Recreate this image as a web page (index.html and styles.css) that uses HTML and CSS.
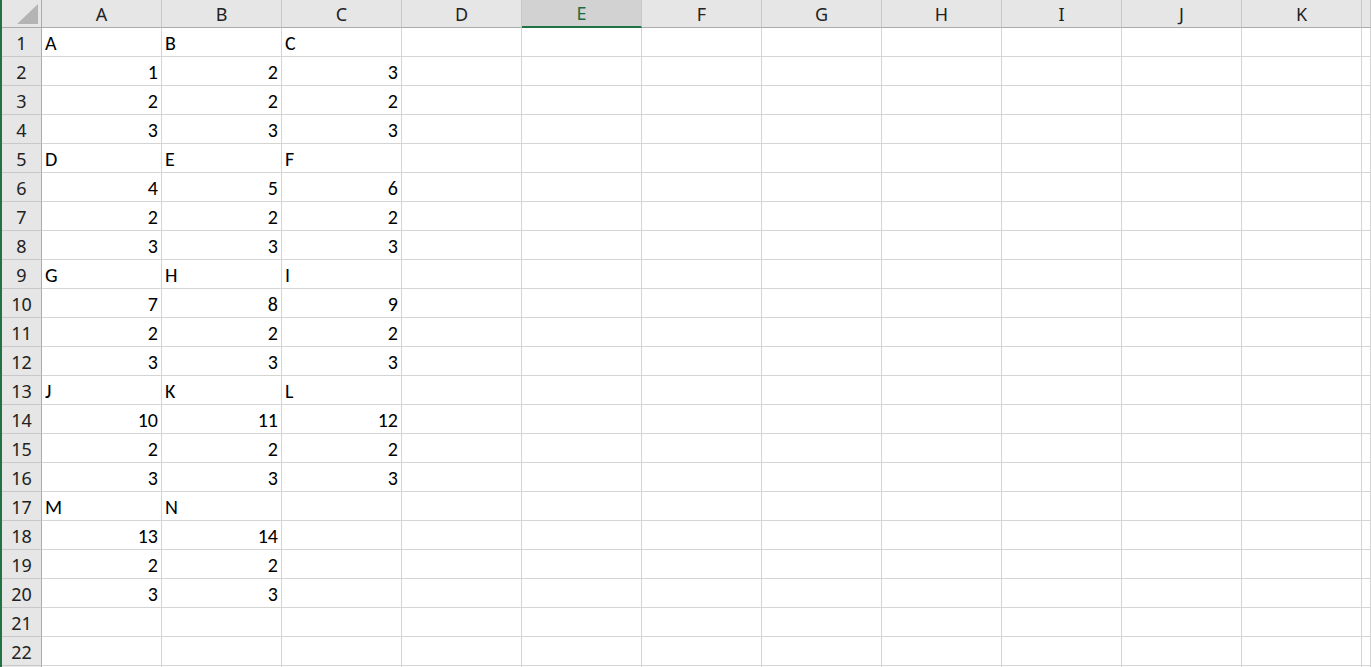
FILE: index.html
```html
<!DOCTYPE html>
<html lang="en">
<head>
<meta charset="utf-8">
<title>Book1 - Sheet1</title>
<link rel="stylesheet" href="styles.css">
</head>
<body>
<div class="sheet">
  <div class="row head">
    <div class="corner"><svg class="corner-mark" width="22" height="21" viewBox="0 0 22 21"><polygon points="21,0 21,20 0,20" fill="#b4b4b4"/></svg></div>
    <div class="ch">A</div><div class="ch">B</div><div class="ch">C</div><div class="ch">D</div><div class="ch sel">E</div><div class="ch">F</div><div class="ch">G</div><div class="ch">H</div><div class="ch">I</div><div class="ch">J</div><div class="ch">K</div><div class="ch"></div>
  </div>
  <div class="row"><div class="rh">1</div><div class="cell">A</div><div class="cell">B</div><div class="cell">C</div><div class="cell"></div><div class="cell"></div><div class="cell"></div><div class="cell"></div><div class="cell"></div><div class="cell"></div><div class="cell"></div><div class="cell"></div><div class="cell"></div></div>
  <div class="row"><div class="rh">2</div><div class="cell num">1</div><div class="cell num">2</div><div class="cell num">3</div><div class="cell"></div><div class="cell"></div><div class="cell"></div><div class="cell"></div><div class="cell"></div><div class="cell"></div><div class="cell"></div><div class="cell"></div><div class="cell"></div></div>
  <div class="row"><div class="rh">3</div><div class="cell num">2</div><div class="cell num">2</div><div class="cell num">2</div><div class="cell"></div><div class="cell"></div><div class="cell"></div><div class="cell"></div><div class="cell"></div><div class="cell"></div><div class="cell"></div><div class="cell"></div><div class="cell"></div></div>
  <div class="row"><div class="rh">4</div><div class="cell num">3</div><div class="cell num">3</div><div class="cell num">3</div><div class="cell"></div><div class="cell"></div><div class="cell"></div><div class="cell"></div><div class="cell"></div><div class="cell"></div><div class="cell"></div><div class="cell"></div><div class="cell"></div></div>
  <div class="row"><div class="rh">5</div><div class="cell">D</div><div class="cell">E</div><div class="cell">F</div><div class="cell"></div><div class="cell"></div><div class="cell"></div><div class="cell"></div><div class="cell"></div><div class="cell"></div><div class="cell"></div><div class="cell"></div><div class="cell"></div></div>
  <div class="row"><div class="rh">6</div><div class="cell num">4</div><div class="cell num">5</div><div class="cell num">6</div><div class="cell"></div><div class="cell"></div><div class="cell"></div><div class="cell"></div><div class="cell"></div><div class="cell"></div><div class="cell"></div><div class="cell"></div><div class="cell"></div></div>
  <div class="row"><div class="rh">7</div><div class="cell num">2</div><div class="cell num">2</div><div class="cell num">2</div><div class="cell"></div><div class="cell"></div><div class="cell"></div><div class="cell"></div><div class="cell"></div><div class="cell"></div><div class="cell"></div><div class="cell"></div><div class="cell"></div></div>
  <div class="row"><div class="rh">8</div><div class="cell num">3</div><div class="cell num">3</div><div class="cell num">3</div><div class="cell"></div><div class="cell"></div><div class="cell"></div><div class="cell"></div><div class="cell"></div><div class="cell"></div><div class="cell"></div><div class="cell"></div><div class="cell"></div></div>
  <div class="row"><div class="rh">9</div><div class="cell">G</div><div class="cell">H</div><div class="cell">I</div><div class="cell"></div><div class="cell"></div><div class="cell"></div><div class="cell"></div><div class="cell"></div><div class="cell"></div><div class="cell"></div><div class="cell"></div><div class="cell"></div></div>
  <div class="row"><div class="rh">10</div><div class="cell num">7</div><div class="cell num">8</div><div class="cell num">9</div><div class="cell"></div><div class="cell"></div><div class="cell"></div><div class="cell"></div><div class="cell"></div><div class="cell"></div><div class="cell"></div><div class="cell"></div><div class="cell"></div></div>
  <div class="row"><div class="rh">11</div><div class="cell num">2</div><div class="cell num">2</div><div class="cell num">2</div><div class="cell"></div><div class="cell"></div><div class="cell"></div><div class="cell"></div><div class="cell"></div><div class="cell"></div><div class="cell"></div><div class="cell"></div><div class="cell"></div></div>
  <div class="row"><div class="rh">12</div><div class="cell num">3</div><div class="cell num">3</div><div class="cell num">3</div><div class="cell"></div><div class="cell"></div><div class="cell"></div><div class="cell"></div><div class="cell"></div><div class="cell"></div><div class="cell"></div><div class="cell"></div><div class="cell"></div></div>
  <div class="row"><div class="rh">13</div><div class="cell">J</div><div class="cell">K</div><div class="cell">L</div><div class="cell"></div><div class="cell"></div><div class="cell"></div><div class="cell"></div><div class="cell"></div><div class="cell"></div><div class="cell"></div><div class="cell"></div><div class="cell"></div></div>
  <div class="row"><div class="rh">14</div><div class="cell num">10</div><div class="cell num">11</div><div class="cell num">12</div><div class="cell"></div><div class="cell"></div><div class="cell"></div><div class="cell"></div><div class="cell"></div><div class="cell"></div><div class="cell"></div><div class="cell"></div><div class="cell"></div></div>
  <div class="row"><div class="rh">15</div><div class="cell num">2</div><div class="cell num">2</div><div class="cell num">2</div><div class="cell"></div><div class="cell"></div><div class="cell"></div><div class="cell"></div><div class="cell"></div><div class="cell"></div><div class="cell"></div><div class="cell"></div><div class="cell"></div></div>
  <div class="row"><div class="rh">16</div><div class="cell num">3</div><div class="cell num">3</div><div class="cell num">3</div><div class="cell"></div><div class="cell"></div><div class="cell"></div><div class="cell"></div><div class="cell"></div><div class="cell"></div><div class="cell"></div><div class="cell"></div><div class="cell"></div></div>
  <div class="row"><div class="rh">17</div><div class="cell">M</div><div class="cell">N</div><div class="cell"></div><div class="cell"></div><div class="cell"></div><div class="cell"></div><div class="cell"></div><div class="cell"></div><div class="cell"></div><div class="cell"></div><div class="cell"></div><div class="cell"></div></div>
  <div class="row"><div class="rh">18</div><div class="cell num">13</div><div class="cell num">14</div><div class="cell"></div><div class="cell"></div><div class="cell"></div><div class="cell"></div><div class="cell"></div><div class="cell"></div><div class="cell"></div><div class="cell"></div><div class="cell"></div><div class="cell"></div></div>
  <div class="row"><div class="rh">19</div><div class="cell num">2</div><div class="cell num">2</div><div class="cell"></div><div class="cell"></div><div class="cell"></div><div class="cell"></div><div class="cell"></div><div class="cell"></div><div class="cell"></div><div class="cell"></div><div class="cell"></div><div class="cell"></div></div>
  <div class="row"><div class="rh">20</div><div class="cell num">3</div><div class="cell num">3</div><div class="cell"></div><div class="cell"></div><div class="cell"></div><div class="cell"></div><div class="cell"></div><div class="cell"></div><div class="cell"></div><div class="cell"></div><div class="cell"></div><div class="cell"></div></div>
  <div class="row"><div class="rh">21</div><div class="cell"></div><div class="cell"></div><div class="cell"></div><div class="cell"></div><div class="cell"></div><div class="cell"></div><div class="cell"></div><div class="cell"></div><div class="cell"></div><div class="cell"></div><div class="cell"></div><div class="cell"></div></div>
  <div class="row"><div class="rh">22</div><div class="cell"></div><div class="cell"></div><div class="cell"></div><div class="cell"></div><div class="cell"></div><div class="cell"></div><div class="cell"></div><div class="cell"></div><div class="cell"></div><div class="cell"></div><div class="cell"></div><div class="cell"></div></div>
  <div class="row"><div class="rh"></div><div class="cell"></div><div class="cell"></div><div class="cell"></div><div class="cell"></div><div class="cell"></div><div class="cell"></div><div class="cell"></div><div class="cell"></div><div class="cell"></div><div class="cell"></div><div class="cell"></div><div class="cell"></div></div>
</div>
</body>
</html>
```

FILE: styles.css
```css
* {
  box-sizing: border-box;
}

html,
body {
  margin: 0;
  height: 100%;
  overflow: hidden;
  background: #ffffff;
}

body {
  border-left: 2px solid #217346;
}

.sheet {
  display: flex;
  flex-direction: column;
}

.row {
  display: grid;
  grid-template-columns: 40px repeat(11, 120px) 1fr;
  height: 29px;
  flex: none;
}

.row.head {
  height: 28px;
}

/* column headers */
.corner,
.ch {
  background: #e6e6e6;
  border-right: 1px solid #c8c8c8;
  border-bottom: 1px solid #ababab;
  font-family: "Noto Sans", "Open Sans", sans-serif;
  font-size: 18px;
  line-height: 26px;
  padding-top: 1px;
  text-align: center;
  color: #222222;
}

.corner {
  border-right-color: #ababab;
  display: flex;
  align-items: flex-start;
  justify-content: flex-start;
  padding: 4px 0 0 15px;
}

.corner-mark {
  display: block;
}

.ch.sel {
  background: #d2d2d2;
  color: #1d6b40;
  border-bottom: 2px solid #217346;
  line-height: 25px;
}

/* row numbers */
.rh {
  background: #e6e6e6;
  border-right: 1px solid #ababab;
  border-bottom: 1px solid #c8c8c8;
  font-family: "Noto Sans", "Open Sans", sans-serif;
  font-size: 18px;
  line-height: 26px;
  padding-top: 2px;
  text-align: center;
  color: #222222;
}

/* worksheet cells */
.cell {
  border-right: 1px solid #d4d4d4;
  border-bottom: 1px solid #d4d4d4;
  font-family: Carlito, "Liberation Sans", Arial, sans-serif;
  font-size: 20px;
  line-height: 24px;
  padding: 3px 3px 0 3px;
  white-space: nowrap;
  overflow: hidden;
  color: #000000;
}

.cell.num {
  text-align: right;
  padding-right: 3px;
}
```
